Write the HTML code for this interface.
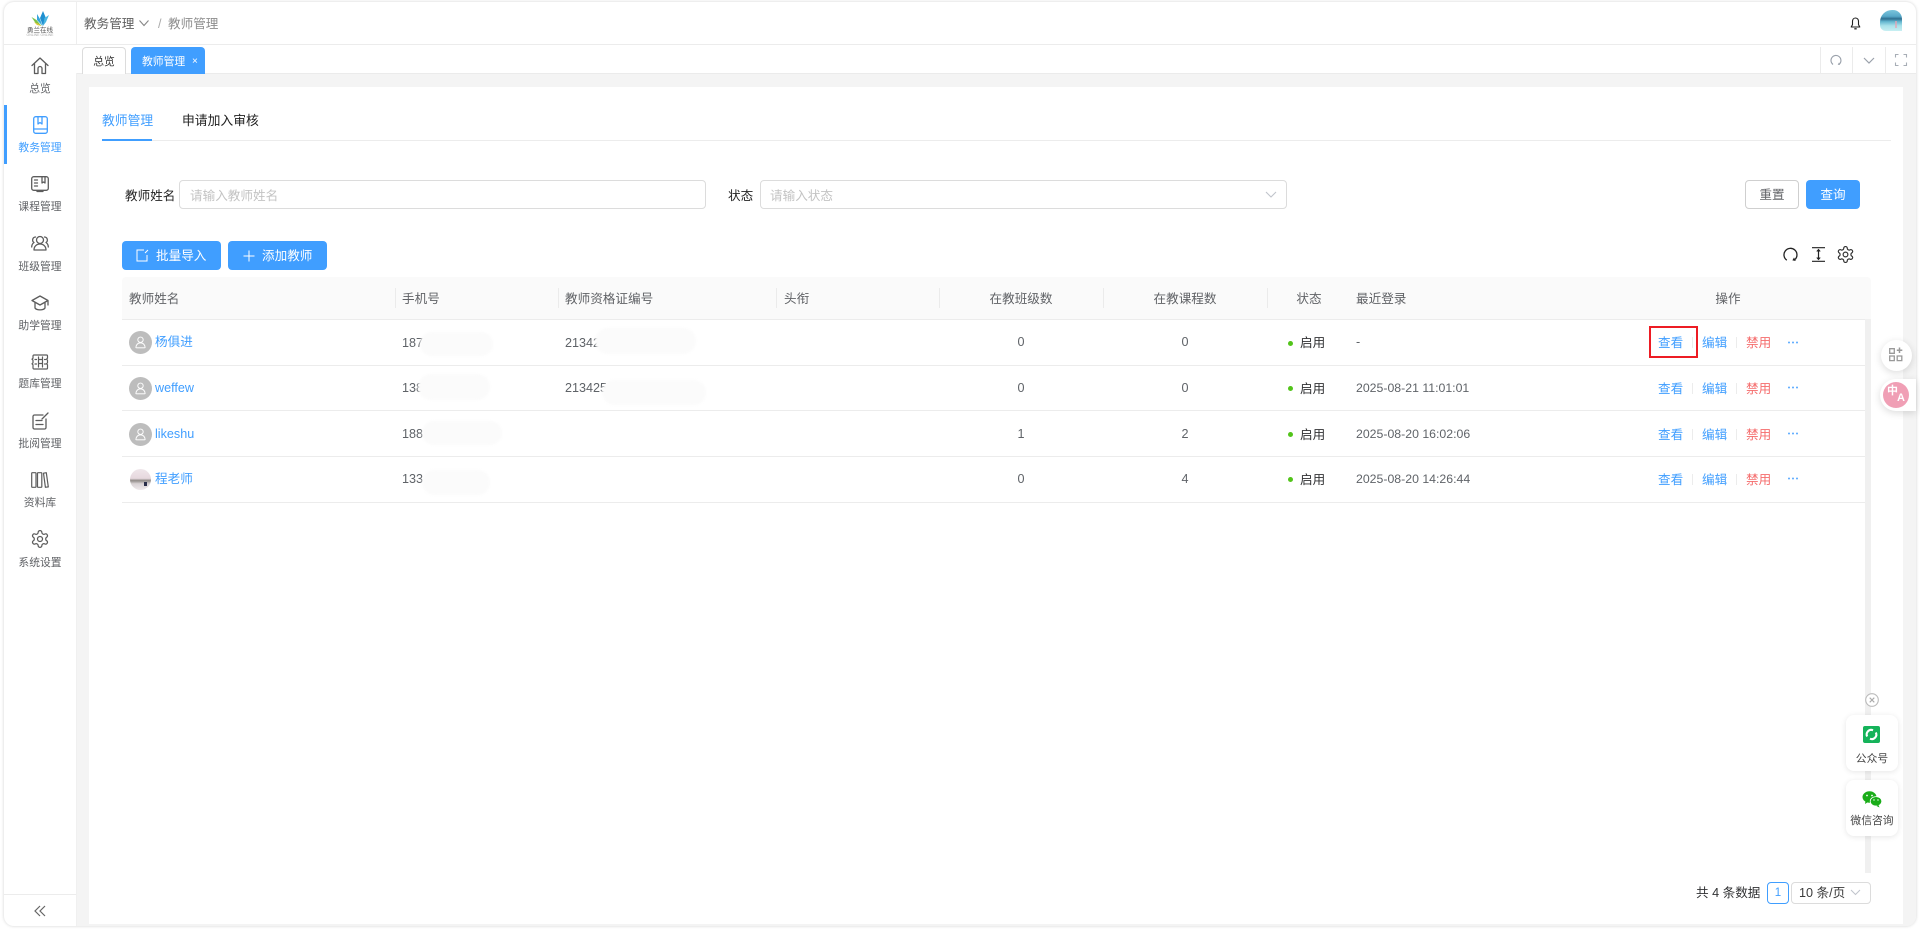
<!DOCTYPE html>
<html lang="zh-CN">
<head>
<meta charset="utf-8">
<title>教师管理</title>
<style>
html,body{margin:0;padding:0;width:1920px;height:930px;overflow:hidden;background:#fff}
body{font-family:"Liberation Sans","Noto Sans CJK SC",sans-serif;font-size:12.6px;color:#606266;position:relative}
div,span,svg{position:absolute;box-sizing:border-box}
.t{white-space:nowrap;line-height:20px;height:20px;margin-top:1px}
.c{text-align:center}
.nav{left:4px;width:72px;text-align:center;font-size:10.8px;color:#606266;white-space:nowrap;line-height:16px;height:16px;margin-top:1px}
svg{overflow:visible}
.ic{fill:none;stroke:#5c5c5c;stroke-width:1.3;stroke-linecap:round;stroke-linejoin:round}
.blue{color:#409eff}.red{color:#f56c6c}.dk{color:#303133}.g6{color:#5f6368;margin-top:0}
.date{font-size:12.3px}
.btn{background:#409eff;border-radius:4px;color:#fff;text-align:center}
.line{background:#ececec;height:1px}
.vd{background:#ebebeb;width:1px}
.blob{background:#fbfbfb;border-radius:13px;filter:blur(1px)}
.av{width:23px;height:23px;left:129px;border-radius:50%;background:#bdbdbd}
.sep{width:1px;height:11px;background:#ececec}
</style>
</head>
<body>
<svg width="0" height="0" style="position:absolute"><defs>
<symbol id="gear" viewBox="0 0 24 24"><path d="M12.22 2h-.44a2 2 0 0 0-2 2v.18a2 2 0 0 1-1 1.73l-.43.25a2 2 0 0 1-2 0l-.15-.08a2 2 0 0 0-2.73.73l-.22.38a2 2 0 0 0 .73 2.73l.15.1a2 2 0 0 1 1 1.72v.51a2 2 0 0 1-1 1.74l-.15.09a2 2 0 0 0-.73 2.73l.22.38a2 2 0 0 0 2.73.73l.15-.08a2 2 0 0 1 2 0l.43.25a2 2 0 0 1 1 1.73V20a2 2 0 0 0 2 2h.44a2 2 0 0 0 2-2v-.18a2 2 0 0 1 1-1.73l.43-.25a2 2 0 0 1 2 0l.15.08a2 2 0 0 0 2.73-.73l.22-.39a2 2 0 0 0-.73-2.73l-.15-.08a2 2 0 0 1-1-1.74v-.5a2 2 0 0 1 1-1.74l.15-.09a2 2 0 0 0 .73-2.73l-.22-.38a2 2 0 0 0-2.73-.73l-.15.08a2 2 0 0 1-2 0l-.43-.25a2 2 0 0 1-1-1.73V4a2 2 0 0 0-2-2z"/><circle cx="12" cy="12" r="3"/></symbol>
<symbol id="user" viewBox="0 0 24 24"><circle cx="12" cy="8.500" r="3.400" fill="none" stroke="#fff" stroke-width="1.200"/><path d="M6.200 18.500c0-3.400 2.300-6 5.800-6s5.800 2.600 5.800 6" fill="none" stroke="#fff" stroke-width="1.200" stroke-linecap="round"/><path d="M6.500 18.700h11" stroke="#fff" stroke-width="1.200"/></symbol>
</defs></svg>

<!-- card -->
<div style="left:4px;top:2px;width:1912px;height:924px;background:#fff;border-radius:10px;box-shadow:0 0 3px rgba(0,0,0,.18);overflow:hidden">
  <div style="left:72px;top:71px;width:1840px;height:853px;background:#f4f4f4"></div>
  <div style="left:85px;top:85px;width:1814px;height:837px;background:#fff"></div>
  <div style="left:72px;top:0;width:1px;height:42px;background:#eee"></div>
  <div style="left:0;top:42px;width:1912px;height:1px;background:#ececec"></div>
  <div style="left:72px;top:71px;width:1840px;height:1px;background:#ebebeb"></div>
  <div style="left:72px;top:71px;width:1px;height:853px;background:#f0f0f0"></div>
  <div style="left:0;top:892px;width:72px;height:1px;background:#ececec"></div>
  <div style="left:0;top:103px;width:3px;height:59px;background:#409eff"></div>
</div>

<!-- logo -->
<svg style="left:31px;top:11px" width="19" height="16" viewBox="0 0 19 16">
  <path d="M12 0l2.500 6-2.500 9-3-8z" fill="#1e8fd0"/><path d="M6 3l3 5 2.500 7-5.500-6z" fill="#37a6dc"/><path d="M18 4l-3 7-3 4 1.500-8z" fill="#4ab6e2"/><path d="M0.500 6l5 3 5 6-6-3z" fill="#7cc24a"/><path d="M3 11l4 1.500 3.500 2.500-4.500-1z" fill="#e0c93a"/>
</svg>
<span class="c" style="left:24px;top:26.500px;width:32px;font-size:6.500px;line-height:8px;color:#555;white-space:nowrap">勇兰在线</span>
<span class="c" style="left:24px;top:33px;width:32px;font-size:3.500px;line-height:4px;color:#aaa;white-space:nowrap">ONLINE ONLINE</span>

<!-- header -->
<span class="t" style="left:84px;top:13px;color:#5f5f5f">教务管理</span>
<svg style="left:138px;top:19px" width="12" height="9" viewBox="0 0 12 9"><path d="M1.500 1.500L6 6.500l4.500-5" fill="none" stroke="#888" stroke-width="1.100"/></svg>
<span class="t" style="left:158px;top:13px;color:#aaa">/</span>
<span class="t" style="left:168px;top:13px;color:#8d8d8d">教师管理</span>
<svg style="left:1849.500px;top:16.500px" width="11" height="13" viewBox="0 0 11 13"><path d="M5.500 1c-2.100 0-3 1.700-3 3.400v3.200L1.200 10h8.600L8.500 7.600V4.400C8.500 2.700 7.600 1 5.500 1z" fill="none" stroke="#222" stroke-width="1.100" stroke-linejoin="round"/><path d="M4.300 11.800h2.400" stroke="#222" stroke-width="1.300"/></svg>
<div style="left:1880px;top:10px;width:22px;height:21px;border-radius:12px 9px 0 6px;overflow:hidden;background:linear-gradient(180deg,#7cc5dc 0,#57a8c8 30%,#2f6f90 42%,#63b6cf 55%,#a9e2ea 75%,#c8eff2 100%)"><div style="left:15px;top:11px;width:2px;height:7px;background:#e7a4b4;opacity:.7"></div></div>

<!-- tabs -->
<div class="c" style="left:82px;top:47px;width:44px;height:27px;border:1px solid #dcdcdc;border-bottom:none;border-radius:4px 4px 0 0;font-size:10.8px;line-height:29px;color:#333;background:#fff">总览</div>
<div style="left:131px;top:47px;width:74px;height:27px;background:#409eff;border-radius:4px 4px 0 0;color:#fff;font-size:10.8px;line-height:30px"><span style="left:11px;top:0;white-space:nowrap">教师管理</span><span style="left:61px;top:0;font-size:10px">×</span></div>
<div class="vd" style="left:1820px;top:47px;height:27px"></div>
<div class="vd" style="left:1852px;top:47px;height:27px"></div>
<div class="vd" style="left:1885px;top:47px;height:27px"></div>
<svg style="left:1830px;top:54px" width="12" height="12" viewBox="0 0 12 12"><path d="M3 10.500A5 5 0 1 1 9.500 10" fill="none" stroke="#9aa1ab" stroke-width="1.100"/><path d="M9 8.500l1 2.500-2.300-.2z" fill="#9aa1ab"/></svg>
<svg style="left:1863px;top:57px" width="12" height="7" viewBox="0 0 12 7"><path d="M1 1l5 5 5-5" fill="none" stroke="#9aa1ab" stroke-width="1.200"/></svg>
<svg style="left:1895px;top:54px" width="12" height="12" viewBox="0 0 12 12"><path d="M0.500 3.500v-3h3M8.500 .5h3v3M11.500 8.500v3h-3M3.500 11.500h-3v-3" fill="none" stroke="#a7adb5" stroke-width="1.100"/></svg>

<!-- sidebar icons -->
<svg class="ic" style="left:31px;top:57px" width="18" height="18" viewBox="0 0 18 18"><path d="M1 8.500L9 1l8 7.500"/><path d="M3.500 7v9.500h3.500v-5a2 2 0 0 1 4 0v5h3.500V7"/></svg>
<span class="nav" style="top:80px">总览</span>
<svg class="ic" style="left:33px;top:116px;stroke:#409eff" width="15" height="18" viewBox="0 0 15 18"><rect x=".7" y=".7" width="13.600" height="16.600" rx="2"/><path d="M.7 13h13.600M5 1v7l2-1.500L9 8V1"/></svg>
<span class="nav blue" style="top:139px">教务管理</span>
<svg class="ic" style="left:31px;top:176px" width="18" height="16" viewBox="0 0 18 16"><rect x=".7" y=".7" width="16.600" height="13.600" rx="2"/><path d="M3.500 4h3M3.500 7h3M3.500 10h3M11 1v6l1.500-1L14 7V1M6 15.500h6"/></svg>
<span class="nav" style="top:198px">课程管理</span>
<svg class="ic" style="left:31px;top:235px" width="18" height="16" viewBox="0 0 18 16"><circle cx="9" cy="5" r="3.500"/><path d="M3 15c0-3.500 2.500-6 6-6s6 2.500 6 6z"/><path d="M4.500 2A3 3 0 0 0 3 7.500C1.500 8.500.7 10 .7 12M13.500 2A3 3 0 0 1 15 7.500c1.500 1 2.300 2.500 2.300 4.500"/></svg>
<span class="nav" style="top:258px">班级管理</span>
<svg class="ic" style="left:31px;top:295px" width="18" height="17" viewBox="0 0 18 17"><path d="M9 1L1 5.500 9 10l8-4.500z"/><path d="M4 8v5c1.500 2.500 8.500 2.500 10 0V8M17 6v4"/></svg>
<span class="nav" style="top:317px">助学管理</span>
<svg class="ic" style="left:31px;top:354px;stroke-width:1.200" width="18" height="16" viewBox="0 0 18 16"><path d="M3 1h12.500a1 1 0 0 1 1 1v2.200l-1 1 1 1v2.600l-1 1 1 1V14a1 1 0 0 1-1 1H3a1 1 0 0 1-1-1v-3.200l-1-1 1-1V6.200l-1-1 1-1V2a1 1 0 0 1 1-1z"/><path d="M7.500 3v10M11.500 3v10M7.500 5.500h4M7.500 9.500h4M4 5.500h1.500M4 10h1.500M13.500 5.500h1M13.500 10h1"/></svg>
<span class="nav" style="top:375px">题库管理</span>
<svg class="ic" style="left:32px;top:412px" width="17" height="18" viewBox="0 0 17 18"><path d="M11 3H2.500A1.500 1.500 0 0 0 1 4.500v11A1.500 1.500 0 0 0 2.500 17h10a1.500 1.500 0 0 0 1.500-1.500V7"/><path d="M4 8.500h6M4 12.500h7M10 7L16 1"/></svg>
<span class="nav" style="top:435px">批阅管理</span>
<svg class="ic" style="left:31px;top:472px;stroke-width:1.200" width="18" height="16" viewBox="0 0 18 16"><rect x=".7" y=".7" width="4.300" height="14.600" rx=".6"/><rect x="6.500" y=".7" width="4.300" height="14.600" rx=".6"/><path d="M12.500 1.200l2.800-.5 2 14.200-2.900.4z"/></svg>
<span class="nav" style="top:494px">资料库</span>
<svg class="ic" style="left:30px;top:529px;stroke-width:1.500" width="20" height="20"><use href="#gear" width="20" height="20"/></svg>
<span class="nav" style="top:554px">系统设置</span>
<svg style="left:34px;top:905px" width="12" height="12" viewBox="0 0 12 12"><path d="M6 1L1 6l5 5M11 1L6 6l5 5" fill="none" stroke="#666" stroke-width="1.200"/></svg>

<!-- inner tabs -->
<span class="t blue" style="left:102px;top:110px;font-size:12.800px">教师管理</span>
<span class="t" style="left:182px;top:110px;font-size:12.800px;color:#222">申请加入审核</span>
<div style="left:102px;top:140px;width:1789px;height:1px;background:#ececec"></div>
<div style="left:102px;top:139px;width:50px;height:2px;background:#409eff"></div>

<!-- form -->
<span class="t" style="left:125px;top:185px;color:#222">教师姓名</span>
<div style="left:179px;top:180px;width:527px;height:29px;border:1px solid #dcdcdc;border-radius:4px;background:#fff"></div>
<span class="t" style="left:190px;top:185px;color:#c3c3c3">请输入教师姓名</span>
<span class="t" style="left:728px;top:185px;color:#222">状态</span>
<div style="left:760px;top:180px;width:527px;height:29px;border:1px solid #dcdcdc;border-radius:4px;background:#fff"></div>
<span class="t" style="left:770px;top:185px;color:#c3c3c3">请输入状态</span>
<svg style="left:1265px;top:191px" width="12" height="8" viewBox="0 0 12 8"><path d="M1 1l5 5 5-5" fill="none" stroke="#c0c4cc" stroke-width="1.100"/></svg>
<div class="c" style="left:1745px;top:180px;width:54px;height:29px;border:1px solid #cfcfcf;border-radius:4px;line-height:29px;color:#606266">重置</div>
<div class="btn" style="left:1806px;top:180px;width:54px;height:29px;line-height:31px">查询</div>

<!-- toolbar -->
<div class="btn" style="left:122px;top:241px;width:99px;height:29px"></div>
<svg style="left:136px;top:249px" width="13" height="13" viewBox="0 0 13 13"><path d="M8 1H1v11h10V6M9 4l3-3" fill="none" stroke="#fff" stroke-width="1"/></svg>
<span class="t" style="left:156px;top:245px;color:#fff">批量导入</span>
<div class="btn" style="left:228px;top:241px;width:99px;height:29px"></div>
<svg style="left:243px;top:250px" width="12" height="12" viewBox="0 0 12 12"><path d="M6 .5v11M.5 6h11" stroke="#fff" stroke-width="1"/></svg>
<span class="t" style="left:262px;top:245px;color:#fff">添加教师</span>
<svg style="left:1783px;top:247px" width="15" height="15" viewBox="0 0 15 15"><path d="M3.800 13.200A6.500 6.500 0 1 1 12 12.500" fill="none" stroke="#222" stroke-width="1.300"/><path d="M11 10.500l1.800 3.500-3.400-.6z" fill="#222"/></svg>
<svg style="left:1812px;top:247px" width="13" height="15" viewBox="0 0 13 15"><path d="M0 .7h13M0 14.300h13M6.500 3v9" stroke="#222" stroke-width="1.200" fill="none"/><path d="M4.800 4.500L6.500 2.500l1.700 2M4.800 10.500l1.700 2 1.700-2" stroke="#222" fill="none"/></svg>
<svg class="ic" style="left:1835.500px;top:244.500px;stroke:#333;stroke-width:1.500" width="19" height="19"><use href="#gear" width="19" height="19"/></svg>

<!-- table header -->
<div style="left:122px;top:277px;width:1749px;height:42px;background:#fafafa;border-radius:4px 4px 0 0"></div>
<div style="left:1865px;top:319px;width:6px;height:554px;background:#f0f0f0"></div>
<div class="line" style="left:122px;top:319px;width:1743px"></div>
<div class="vd" style="left:395px;top:288px;height:20px"></div>
<div class="vd" style="left:558px;top:288px;height:20px"></div>
<div class="vd" style="left:776px;top:288px;height:20px"></div>
<div class="vd" style="left:939px;top:288px;height:20px"></div>
<div class="vd" style="left:1103px;top:288px;height:20px"></div>
<div class="vd" style="left:1267px;top:288px;height:20px"></div>
<span class="t" style="left:129px;top:288px">教师姓名</span>
<span class="t" style="left:402px;top:288px">手机号</span>
<span class="t" style="left:565px;top:288px">教师资格证编号</span>
<span class="t" style="left:784px;top:288px">头衔</span>
<span class="t c" style="left:941px;top:288px;width:160px">在教班级数</span>
<span class="t c" style="left:1105px;top:288px;width:160px">在教课程数</span>
<span class="t c" style="left:1269px;top:288px;width:80px">状态</span>
<span class="t" style="left:1356px;top:288px">最近登录</span>
<span class="t c" style="left:1688px;top:288px;width:80px">操作</span>

<!-- row lines -->
<div class="line" style="left:122px;top:365px;width:1743px"></div>
<div class="line" style="left:122px;top:410px;width:1743px"></div>
<div class="line" style="left:122px;top:456px;width:1743px"></div>
<div class="line" style="left:122px;top:502px;width:1743px"></div>

<!-- avatars -->
<div class="av" style="top:331px"><svg style="left:2px;top:2px" width="19" height="19"><use href="#user" width="19" height="19"/></svg></div>
<div class="av" style="top:377px"><svg style="left:2px;top:2px" width="19" height="19"><use href="#user" width="19" height="19"/></svg></div>
<div class="av" style="top:423px"><svg style="left:2px;top:2px" width="19" height="19"><use href="#user" width="19" height="19"/></svg></div>
<div style="left:130px;top:469px;width:21px;height:21px;border-radius:50%;overflow:hidden;background:linear-gradient(180deg,#efe6ea 0,#e6d8de 45%,#8f8a86 55%,#d8d2d4 70%,#efe9ec 100%)"><div style="left:14px;top:13px;width:3px;height:4px;background:#2a2f4a"></div></div>

<!-- row 1 -->
<span class="t blue" style="left:155px;top:331px">杨俱进</span>
<span class="t g6" style="left:402px;top:333px">187</span>
<div class="blob" style="left:420px;top:332px;width:73px;height:24px"></div>
<span class="t g6" style="left:565px;top:333px">21342</span>
<div class="blob" style="left:595px;top:328px;width:101px;height:26px"></div>
<span class="t c g6" style="left:941px;top:332px;width:160px">0</span>
<span class="t c g6" style="left:1105px;top:332px;width:160px">0</span>
<div style="left:1288px;top:341px;width:5px;height:5px;border-radius:50%;background:#52c41a"></div>
<span class="t dk" style="left:1300px;top:332px">启用</span>
<span class="t g6" style="left:1356px;top:332px">-</span>

<!-- row 2 -->
<span class="t blue" style="left:155px;top:377px">weffew</span>
<span class="t g6" style="left:402px;top:378px">138</span>
<div class="blob" style="left:418px;top:374px;width:72px;height:26px"></div>
<span class="t g6" style="left:565px;top:378px">213425</span>
<div class="blob" style="left:602px;top:380px;width:104px;height:25px"></div>
<span class="t c g6" style="left:941px;top:378px;width:160px">0</span>
<span class="t c g6" style="left:1105px;top:378px;width:160px">0</span>
<div style="left:1288px;top:386px;width:5px;height:5px;border-radius:50%;background:#52c41a"></div>
<span class="t dk" style="left:1300px;top:378px">启用</span>
<span class="t g6 date" style="left:1356px;top:378px">2025-08-21 11:01:01</span>

<!-- row 3 -->
<span class="t blue" style="left:155px;top:423px">likeshu</span>
<span class="t g6" style="left:402px;top:424px">188</span>
<div class="blob" style="left:422px;top:421px;width:80px;height:24px"></div>
<span class="t c g6" style="left:941px;top:424px;width:160px">1</span>
<span class="t c g6" style="left:1105px;top:424px;width:160px">2</span>
<div style="left:1288px;top:432px;width:5px;height:5px;border-radius:50%;background:#52c41a"></div>
<span class="t dk" style="left:1300px;top:424px">启用</span>
<span class="t g6 date" style="left:1356px;top:424px">2025-08-20 16:02:06</span>

<!-- row 4 -->
<span class="t blue" style="left:155px;top:468px">程老师</span>
<span class="t g6" style="left:402px;top:469px">133</span>
<div class="blob" style="left:422px;top:470px;width:68px;height:25px"></div>
<span class="t c g6" style="left:941px;top:469px;width:160px">0</span>
<span class="t c g6" style="left:1105px;top:469px;width:160px">4</span>
<div style="left:1288px;top:477px;width:5px;height:5px;border-radius:50%;background:#52c41a"></div>
<span class="t dk" style="left:1300px;top:469px">启用</span>
<span class="t g6 date" style="left:1356px;top:469px">2025-08-20 14:26:44</span>

<!-- actions -->
<span class="t blue" style="left:1658px;top:332px">查看</span><div class="sep" style="left:1692px;top:337px"></div><span class="t blue" style="left:1702px;top:332px">编辑</span><div class="sep" style="left:1736px;top:337px"></div><span class="t red" style="left:1746px;top:332px">禁用</span>
<svg style="left:1787px;top:341px" width="12" height="3" viewBox="0 0 12 3"><circle cx="2" cy="1.500" r="1" fill="#5aa9ff"/><circle cx="6" cy="1.500" r="1" fill="#5aa9ff"/><circle cx="10" cy="1.500" r="1" fill="#5aa9ff"/></svg>
<span class="t blue" style="left:1658px;top:378px">查看</span><div class="sep" style="left:1692px;top:383px"></div><span class="t blue" style="left:1702px;top:378px">编辑</span><div class="sep" style="left:1736px;top:383px"></div><span class="t red" style="left:1746px;top:378px">禁用</span>
<svg style="left:1787px;top:386px" width="12" height="3" viewBox="0 0 12 3"><circle cx="2" cy="1.500" r="1" fill="#5aa9ff"/><circle cx="6" cy="1.500" r="1" fill="#5aa9ff"/><circle cx="10" cy="1.500" r="1" fill="#5aa9ff"/></svg>
<span class="t blue" style="left:1658px;top:424px">查看</span><div class="sep" style="left:1692px;top:429px"></div><span class="t blue" style="left:1702px;top:424px">编辑</span><div class="sep" style="left:1736px;top:429px"></div><span class="t red" style="left:1746px;top:424px">禁用</span>
<svg style="left:1787px;top:432px" width="12" height="3" viewBox="0 0 12 3"><circle cx="2" cy="1.500" r="1" fill="#5aa9ff"/><circle cx="6" cy="1.500" r="1" fill="#5aa9ff"/><circle cx="10" cy="1.500" r="1" fill="#5aa9ff"/></svg>
<span class="t blue" style="left:1658px;top:469px">查看</span><div class="sep" style="left:1692px;top:474px"></div><span class="t blue" style="left:1702px;top:469px">编辑</span><div class="sep" style="left:1736px;top:474px"></div><span class="t red" style="left:1746px;top:469px">禁用</span>
<svg style="left:1787px;top:477px" width="12" height="3" viewBox="0 0 12 3"><circle cx="2" cy="1.500" r="1" fill="#5aa9ff"/><circle cx="6" cy="1.500" r="1" fill="#5aa9ff"/><circle cx="10" cy="1.500" r="1" fill="#5aa9ff"/></svg>
<div style="left:1649px;top:326px;width:49px;height:32px;border:2px solid #ed1c24"></div>

<!-- right floats -->
<div style="left:1881px;top:340px;width:31px;height:31px;border-radius:50%;background:#fff;box-shadow:0 2px 8px rgba(0,0,0,.14)"></div>
<svg style="left:1889px;top:347px" width="14" height="15" viewBox="0 0 14 15"><path d="M.7 1.700h4.600v4.600H.7zM.7 9h4.600v4.600H.7zM8.200 9h4.600v4.600H8.200z" fill="none" stroke="#999" stroke-width="1.300"/><path d="M10.500 .5v5.500M7.800 3.200h5.500" stroke="#999" stroke-width="1.500"/></svg>
<div style="left:1880px;top:379px;width:36px;height:32px;border-radius:16px 0 0 16px;background:#fff;box-shadow:0 2px 8px rgba(0,0,0,.14)"></div>
<div style="left:1883px;top:382px;width:26px;height:26px;border-radius:50%;background:#f09fb5;color:#fff;font-weight:bold"><span style="left:4px;top:4px;font-size:11px;line-height:11px">中</span><span style="left:14px;top:11px;font-size:11px;line-height:11px">A</span></div>

<svg style="left:1865px;top:693px" width="14" height="14" viewBox="0 0 14 14"><circle cx="7" cy="7" r="6.300" fill="#fff" stroke="#bbb" stroke-width="1.100"/><path d="M4.700 4.700l4.600 4.600M9.300 4.700L4.700 9.300" stroke="#aaa" stroke-width="1.100"/></svg>

<div style="left:1846px;top:715px;width:52px;height:56px;border-radius:8px;background:#fff;box-shadow:0 1px 6px rgba(0,0,0,.1)"></div>
<div style="left:1863px;top:726px;width:17px;height:17px;border-radius:2px;background:#15b35a"></div>
<svg style="left:1865px;top:728px" width="13" height="13" viewBox="0 0 13 13"><path d="M2.200 8.500A4.500 4.500 0 0 1 8 2.300M10.800 4.500A4.500 4.500 0 0 1 5 10.700" fill="none" stroke="#fff" stroke-width="2.100"/></svg>
<span class="t c" style="left:1846px;top:748px;width:52px;color:#444;font-size:10.800px">公众号</span>

<div style="left:1846px;top:780px;width:52px;height:56px;border-radius:8px;background:#fff;box-shadow:0 1px 6px rgba(0,0,0,.1)"></div>
<svg style="left:1862px;top:791px" width="20" height="17" viewBox="0 0 20 17"><ellipse cx="7.500" cy="6" rx="7" ry="5.700" fill="#1aad19"/><path d="M3.500 10l-.5 3 3-2z" fill="#1aad19"/><ellipse cx="14" cy="10.300" rx="5.800" ry="4.700" fill="#1aad19" stroke="#fff" stroke-width=".8"/><path d="M16.500 14l1 2.500-3-1.500z" fill="#1aad19"/><circle cx="5" cy="4.500" r=".9" fill="#fff"/><circle cx="10" cy="4.500" r=".9" fill="#fff"/><circle cx="12" cy="9" r=".7" fill="#fff"/><circle cx="16" cy="9" r=".7" fill="#fff"/></svg>
<span class="t c" style="left:1846px;top:810px;width:52px;color:#444;font-size:10.800px">微信咨询</span>

<!-- pagination -->
<span class="t" style="left:1696px;top:882px;color:#303133">共 4 条数据</span>
<div class="c blue" style="left:1767px;top:882px;width:22px;height:22px;border:1px solid #409eff;border-radius:4px;line-height:20px;font-size:11.500px">1</div>
<div style="left:1791px;top:882px;width:80px;height:22px;border:1px solid #dcdcdc;border-radius:4px"></div>
<span class="t" style="left:1799px;top:882px;color:#3a3a3a">10 条/页</span>
<svg style="left:1850px;top:889px" width="11" height="7" viewBox="0 0 11 7"><path d="M1 1l4.500 4.500L10 1" fill="none" stroke="#c0c4cc" stroke-width="1"/></svg>
</body>
</html>
